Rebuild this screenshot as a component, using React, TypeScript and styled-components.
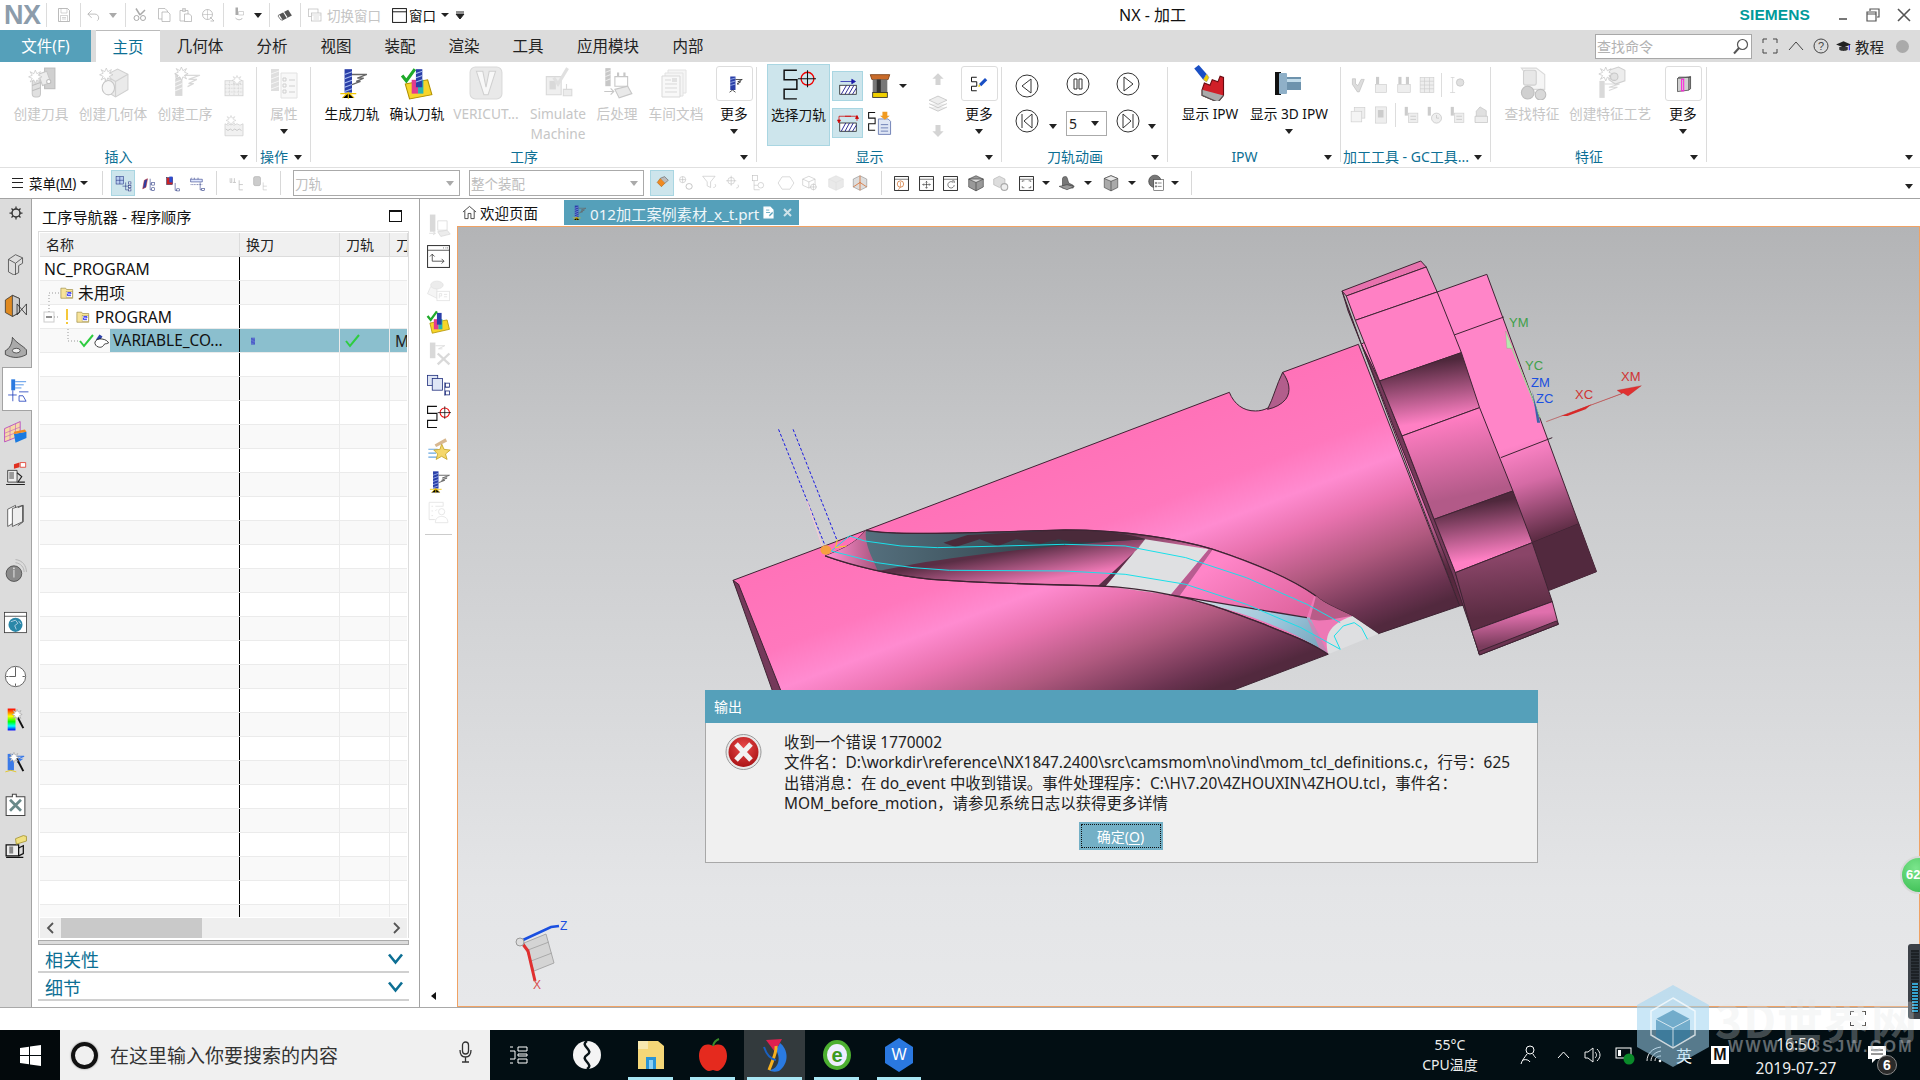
import React from "react";
import styled, { createGlobalStyle } from "styled-components";

const FONT = `"Noto Sans", "Noto Sans CJK SC", sans-serif`;
const Global = createGlobalStyle`
  html, body { margin: 0; padding: 0; width: 1920px; height: 1080px; overflow: hidden; background: #fff; }
  * { box-sizing: border-box; }
  body { font-family: ${FONT}; color: #111; }
`;

const Screen = styled.div`position: relative; width: 1920px; height: 1080px; display: flex; flex-direction: column; overflow: hidden;`;

/* ---------- icons ---------- */
const g = "#9a9a9a", b = "#2a3fa8";
const Spark = ({ x = 8, y = 6 }: { x?: number; y?: number }) => (
  <path d={`M${x} ${y - 5}l1.5 3.5 3.5-2-2 3.5 3.5 1.5-3.5 1.5 2 3.5-3.5-2-1.5 3.5-1.5-3.5-3.5 2 2-3.5-3.5-1.5 3.5-1.5-2-3.5 3.5 2z`} fill="#fff" stroke="#999" strokeWidth=".7" />
);
const DrillBody = ({ c = b, x = 9 }: { c?: string; x?: number }) => (
  <g>
    <rect x={x} y="3" width="7" height="22" fill={c} />
    <path d={`M${x} 8l7-2.5M${x} 12l7-2.5M${x} 16l7-2.5M${x} 20l7-2.5M${x} 24l7-2.5`} stroke="#a9bdf0" strokeWidth="1" />
  </g>
);
const ICONS: Record<string, React.ReactNode> = {
  genPath: <g><DrillBody /><path d="M16 8h14l-9 3.5h6l-7 3h4l-8 3" stroke="#666" strokeWidth="1.2" fill="none" /><path d="M7 30l5.5-5 5.5 5M12.5 25v6M5 26h15" stroke="#f0c400" strokeWidth="1" /></g>,
  verify: <g><path d="M2 9l4 5 8-11" stroke="#1faa2a" strokeWidth="3" fill="none" /><path d="M5 17l21-4 4 14-21 4z" fill="#f7d52a" stroke="#b19100" /><rect x="11" y="13" width="6" height="13" fill="#e23c8e" /><rect x="17" y="13" width="5" height="13" fill="#27b5b5" /><rect x="15" y="3" width="6" height="17" fill={b} /><path d="M15 7l6-2M15 11l6-2M15 15l6-2" stroke="#a9bdf0" /></g>,
  vericut: <g><rect x="1" y="1" width="30" height="30" rx="5" fill="#d8d8d8" stroke="#bbb" /><path d="M7 5h6l3 15 3-15h6l-7 22h-4z" fill="#f4f4f4" stroke="#aaa" /></g>,
  simulate: <g><path d="M5 10h14v17H5z" fill="#e2e2e2" stroke="#bbb" /><rect x="8" y="14" width="6" height="8" fill="#bbb" /><path d="M12 11l4 6 9-15" stroke="#c8c8c8" strokeWidth="3" fill="none" /><path d="M21 22h8v6h-8z M24 17v5" fill="#ddd" stroke="#bbb" /></g>,
  post: <g><rect x="5" y="2" width="5" height="17" fill={g} /><path d="M5 6l5-2M5 10l5-2M5 14l5-2" stroke="#ddd" /><path d="M14 10h12v9H14z" fill="none" stroke={g} /><path d="M17 6v4M23 6v4" stroke={g} strokeWidth="2" /><path d="M14 22l12-3 4 7-12 4z" fill="#d8d8d8" stroke={g} /><path d="M4 24h9M10 21l3 3-3 3" stroke={g} fill="none" /></g>,
  docs: <g><path d="M8 3h18v23H8z" fill="#eee" stroke="#ccc" /><path d="M5 6h18v23H5z" fill="#eee" stroke="#ccc" /><path d="M2 9h18v21H2z" fill="#f4f4f4" stroke="#bbb" /><path d="M5 13h6M5 17h12M5 21h12M5 25h12" stroke="#bbb" /><rect x="12" y="11" width="5" height="4" fill="#ccc" /></g>,
  tool: <g><rect x="19" y="2" width="10" height="20" fill="#aaa" stroke="#888" /><path d="M13 8l8-3 4 11-8 3z" fill="#ddd" stroke="#999" /><circle cx="23" cy="15" r="2" fill="#fff" stroke="#888" /><rect x="7" y="13" width="8" height="17" rx="3" fill="#c8c8c8" stroke="#999" /><path d="M7 19l8-3M7 24l8-3" stroke="#888" /><Spark x={10} y={9} /></g>,
  geom: <g><path d="M8 9l12-6 10 5v15l-12 7-10-6z" fill="#d9d9d9" stroke="#aaa" /><path d="M8 9l10 6v15M18 15l12-7" stroke="#aaa" fill="none" /><ellipse cx="11" cy="21" rx="6" ry="7" fill="#eee" stroke="#999" /><Spark x={9} y={7} /></g>,
  op: <g><rect x="6" y="7" width="7" height="22" fill="#bbb" /><path d="M6 12l7-3M6 16l7-3M6 20l7-3M6 24l7-3" stroke="#eee" /><path d="M13 9h17l-11 4h8l-8 4h5l-6 3" stroke="#bbb" strokeWidth="1.2" fill="none" /><Spark x={12} y={6} /></g>,
  sheet: <g><rect x="4" y="9" width="24" height="20" fill="#e6e6e6" stroke="#aaa" /><path d="M4 14h24M4 19h24M4 24h24M10 9v20M16 9v20M22 9v20" stroke="#aaa" strokeDasharray="1 1" /><Spark x={20} y={7} /></g>,
  wave: <g><path d="M4 13l4 2 4-2 4 2 4-2 4 2 4-2v16H4z" fill="#e6e6e6" stroke="#aaa" /><path d="M5 20l3 2 3-2 3 2 3-2 3 2 3-2 3 2" stroke="#888" fill="none" /><Spark x={12} y={7} /></g>,
  attrs: <g><rect x="3" y="2" width="8" height="22" fill="#c5c5c5" /><path d="M3 7l8-3M3 12l8-3M3 17l8-3M3 22l8-3" stroke="#eee" /><path d="M13 6h16v25H13z" fill="#f3f3f3" stroke="#ccc" /><path d="M15 11h3v3h-3zM15 17h3v3h-3zM15 23h3v3h-3zM21 13h6M21 19h6M21 25h6" stroke="#aaa" fill="none" /></g>,
  selectPath: <g><path d="M13 1H1v9h12v9H1v9h12" fill="none" stroke="#111" strokeWidth="1.4" transform="translate(1 2)" /><circle cx="24" cy="11" r="6" fill="none" stroke="#e00" strokeWidth="1.3" /><path d="M15 11h17M24 3v16" stroke="#111" /></g>,
  hatchA: <g><rect x="5" y="15" width="22" height="12" fill="#fff" stroke="#111" /><path d="M7 27l7-12M12 27l7-12M17 27l7-12M22 27l5-8" stroke="#1a1a8c" strokeWidth="1.2" /><path d="M6 10h18M21 7l5 3-5 3z" stroke="#1a1aa8" fill="#1a1aa8" /></g>,
  hatchB: <g><rect x="5" y="16" width="22" height="11" fill="#fff" stroke="#111" /><path d="M7 27l6-11M12 27l6-11M17 27l6-11M22 27l5-8" stroke="#1a1a8c" strokeWidth="1.2" /><path d="M4 13V7h24v6" stroke="#c00" fill="none" /><path d="M2 12h4l-2 4zM26 10h4l-2-4zM12 7h8" fill="#c00" stroke="#c00" /></g>,
  bit: <g><path d="M4 2h24l-2 6H6z" fill="#c96b2a" stroke="#7a3c10" /><rect x="7" y="8" width="18" height="16" fill="#777" /><rect x="12" y="8" width="5" height="16" fill="#333" /><rect x="7" y="24" width="18" height="6" fill="#f0d000" stroke="#222" /></g>,
  pathDoc: <g><path d="M10 3H2v7h8v7H2v8h8" fill="none" stroke="#111" strokeWidth="1.3" /><path d="M14 11h12l3 3v16H14z" fill="#dfe6f5" stroke="#5a6eaa" /><path d="M17 18h9M17 22h9M17 26h9" stroke="#5a6eaa" /><path d="M19 2h6v5h3l-6 5-6-5h3z" fill="#f09a20" /></g>,
  arrowUp: <path d="M16 5l9 9h-5v10h-8V14H7z" fill="#d4d4d4" />,
  arrowDown: <path d="M16 27l9-9h-5V8h-8v10H7z" fill="#d4d4d4" />,
  layers: <g><path d="M16 3l13 6-13 6-13-6z M3 14l13 6 13-6M3 19l13 6 13-6" fill="#eee" stroke="#bbb" /></g>,
  moreDrill: <g><rect x="11" y="6" width="7" height="18" fill={b} /><path d="M11 10l7-2M11 14l7-2M11 18l7-2" stroke="#a9bdf0" /><path d="M18 10h9l-6 3h4l-5 3h3" stroke="#222" fill="none" /><path d="M10 27l4-3 4 3" stroke="#222" fill="none" /></g>,
  moreS: <g><path d="M13 7H6v6h7v6H6v6h7" fill="none" stroke="#111" strokeWidth="1.3" /><path d="M16 16l8-8 3 3-8 8z" fill="#1a4fc4" /><path d="M16 16l2 3-3 1z" fill="#f0d000" /></g>,
  ipw: <g><path d="M9 22l2-6 5 2 2-5 5 2 2-5 3 1v16l-5 6-14-6z" fill="#d01f28" stroke="#6a0a10" /><path d="M9 22v5l14 6 5-6" fill="#aaa" stroke="#555" /><path d="M2 3l4-3 7 8-3 5z" fill="#1a4fc4" /><path d="M10 13l3-5 2 3-2 4z" fill="#f0d000" stroke="#888" strokeWidth=".5" /></g>,
  ipw3d: <g><rect x="2" y="5" width="6" height="23" fill="#111" /><rect x="6" y="6" width="8" height="21" rx="1" fill="#8fb0c8" /><rect x="14" y="10" width="14" height="13" fill="#6e93ad" /><rect x="14" y="12" width="14" height="3" fill="#c3dcea" /></g>,
  binocular: <g><path d="M6 2h14l8 6v14H12V10z" fill="#eee" stroke="#bbb" /><rect x="8" y="4" width="12" height="14" rx="2" fill="#d4d4d4" stroke="#aaa" /><circle cx="12" cy="25" r="6" fill="#aaa" stroke="#888" /><circle cx="24" cy="27" r="5" fill="#bbb" stroke="#888" /></g>,
  featureOp: <g><rect x="6" y="14" width="5" height="16" fill="#bbb" /><path d="M11 17h14l-10 3h8l-8 3" stroke="#bbb" fill="none" /><path d="M15 4l9-3 6 3v10l-9 3-6-4z" fill="#e0e0e0" stroke="#aaa" /><circle cx="20" cy="10" r="3.5" fill="#ccc" stroke="#999" /><Spark x={12} y={6} /></g>,
  moreCube: <g><path d="M8 8l16-2v19l-16 2z" fill="#d0d0d0" stroke="#333" /><path d="M24 6l3-1v18l-3 2M8 8l2-2h17" fill="#888" stroke="#333" /><rect x="14" y="9" width="3" height="17" fill="none" stroke="#ff1fdc" strokeWidth="1.5" /></g>,
  gcA: <path d="M7 6h5v8l4 3 5-10h5l-8 20h-3L7 15z" fill="#ddd" stroke="#bbb" />,
  gcB: <g><rect x="8" y="3" width="5" height="12" fill="#ccc" /><rect x="7" y="15" width="18" height="13" fill="#eee" stroke="#ccc" /></g>,
  gcC: <g><rect x="7" y="3" width="5" height="12" fill="#ccc" /><rect x="19" y="3" width="5" height="12" fill="#ccc" /><rect x="6" y="15" width="20" height="13" fill="#eee" stroke="#ccc" /></g>,
  gcD: <g><rect x="5" y="4" width="22" height="24" fill="#eee" stroke="#ccc" /><path d="M5 10h22M5 16h22M5 22h22M12 4v24M20 4v24" stroke="#ccc" /></g>,
  gcE: <g><path d="M6 4h6M9 4v24M5 28h8" stroke="#ccc" /><circle cx="21" cy="12" r="6" fill="#e0e0e0" stroke="#bbb" /></g>,
  gcF: <g><rect x="10" y="4" width="17" height="17" fill="#eee" stroke="#ccc" /><rect x="5" y="10" width="17" height="17" fill="#f4f4f4" stroke="#ccc" /></g>,
  gcG: <g><rect x="7" y="3" width="18" height="26" fill="#eee" stroke="#ccc" /><rect x="11" y="8" width="9" height="12" fill="#ccc" /></g>,
  gcH: <g><rect x="6" y="3" width="5" height="14" fill="#ccc" /><rect x="12" y="13" width="15" height="15" fill="#eee" stroke="#ccc" /><path d="M15 18h9M15 23h9" stroke="#bbb" /></g>,
  gcI: <g><rect x="6" y="3" width="5" height="14" fill="#ccc" /><circle cx="20" cy="21" r="8" fill="#eee" stroke="#bbb" /><path d="M20 16v5h4" stroke="#bbb" fill="none" /></g>,
  gcJ: <g><path d="M16 3l10 6v12H10V10z" fill="#e0e0e0" stroke="#bbb" /><path d="M8 18h20v10H8z" fill="#eee" stroke="#bbb" /></g>,
  save: <g><path d="M5 3h18l4 4v22H5z" fill="none" stroke="#aaa" strokeWidth="1.6" /><path d="M10 3v9h12V3M9 28V17h14v11M12 21h8M12 24h8" stroke="#aaa" fill="none" /></g>,
  undo: <path d="M12 5L4 13l8 8M4 13h15c5 0 8 4 8 8 0 3-1 5-3 6" fill="none" stroke="#aaa" strokeWidth="1.6" />,
  cut: <g><path d="M16 16L8 3M16 16L26 6" stroke="#aaa" fill="none" strokeWidth="3" /><circle cx="9" cy="22" r="5" fill="none" stroke="#aaa" strokeWidth="2" /><circle cx="22" cy="22" r="5" fill="none" stroke="#aaa" strokeWidth="2" /></g>,
  copy: <g><path d="M5 3h13l5 5v16H5z" fill="#fff" stroke="#aaa" strokeWidth="1.4" /><path d="M12 10h12l4 4v15H12z" fill="#fff" stroke="#aaa" strokeWidth="1.4" /></g>,
  paste: <g><path d="M4 7h16v21H4z" fill="#fff" stroke="#aaa" strokeWidth="1.4" /><path d="M9 3h6v6H9z" fill="#ddd" stroke="#aaa" /><path d="M13 14h10l4 4v11H13z" fill="#fff" stroke="#aaa" strokeWidth="1.4" /></g>,
  repeat: <g><circle cx="15" cy="15" r="10" fill="none" stroke="#aaa" strokeWidth="1.4" /><path d="M15 5v20M5 15h20" stroke="#aaa" /><path d="M20 20l8 8h-7" fill="none" stroke="#aaa" strokeWidth="1.4" /></g>,
  qatSel: <g><rect x="7" y="1" width="5" height="15" fill="#aaa" /><path d="M13 9h10v7H13z" fill="none" stroke="#aaa" /><path d="M7 22c6 6 12 3 14 0" stroke="#aaa" fill="none" strokeWidth="1.6" /></g>,
  eraser: <g><path d="M4 14l17-9 7 11-17 9z" fill="#555" /><path d="M12 9l7 11" stroke="#fff" strokeWidth="2" /><path d="M4 14l-2 3 5 7 4 1" fill="none" stroke="#111" /></g>,
  switchWin: <g><rect x="3" y="4" width="19" height="15" fill="#fff" stroke="#bbb" strokeWidth="1.4" /><rect x="9" y="12" width="19" height="16" fill="#fff" stroke="#bbb" strokeWidth="1.4" /><path d="M9 16h19M13 20h11M13 24h11" stroke="#bbb" /></g>,
  window: <g><rect x="3" y="3" width="26" height="26" fill="#fff" stroke="#111" strokeWidth="1.8" /><path d="M3 9h26" stroke="#111" strokeWidth="1.8" /></g>,
  tree1: <g><rect x="2" y="3" width="14" height="14" fill="#b8cdf0" stroke="#1a2a7a" /><path d="M9 3v14M2 10h14" stroke="#1a2a7a" /><path d="M20 14v14M14 21h14M20 28h8" stroke="#1a2a7a" fill="none" /><rect x="25" y="13" width="5" height="4" fill="#fff" stroke="#1a2a7a" /><rect x="25" y="20" width="5" height="4" fill="#fff" stroke="#1a2a7a" /><rect x="25" y="26" width="5" height="4" fill="#fff" stroke="#1a2a7a" /></g>,
  tree2: <g><path d="M7 26l3-16 6-3-3 16z" fill={b} stroke="#c02020" /><path d="M21 7v21h7M21 17h7" stroke="#1a2a7a" fill="none" /><rect x="24" y="14" width="5" height="5" fill="#fff" stroke="#1a2a7a" /><rect x="24" y="24" width="5" height="5" fill="#fff" stroke="#1a2a7a" /></g>,
  tree3: <g><rect x="5" y="5" width="11" height="13" fill="#c22" stroke="#225" /><rect x="10" y="3" width="6" height="11" fill="#2a4bd0" /><path d="M21 15v14h7" stroke="#1a2a7a" fill="none" /><rect x="24" y="26" width="5" height="4" fill="#fff" stroke="#1a2a7a" /></g>,
  tree4: <g><path d="M3 8h22v5H3zM3 8l2-3M10 8V5M17 8V5" fill="#e0e8ff" stroke="#1a2a7a" /><path d="M3 18h22" stroke="#1a2a7a" strokeDasharray="2 1" /><path d="M21 14v14h7" stroke="#1a2a7a" fill="none" /><rect x="24" y="25" width="5" height="4" fill="#fff" stroke="#1a2a7a" /></g>,
  treeG1: <g><path d="M4 6v8h3V6M12 6v8M9 14h6M21 10v18h7M21 18h7" stroke="#bbb" fill="none" strokeWidth="1.4" /></g>,
  treeG2: <g><rect x="3" y="3" width="13" height="17" rx="3" fill="#ccc" stroke="#aaa" /><path d="M21 14v14h7M21 21h7" stroke="#bbb" fill="none" /></g>,
  filt1: <g><path d="M12 6l9 9-7 7-8-8z" fill="#f08a20" stroke="#a05a10" /><path d="M12 6l8-3 7 7-6 5" fill="#bbb" stroke="#555" /></g>,
  chain: <g><circle cx="10" cy="10" r="5.5" fill="none" stroke="#bbb" /><path d="M4.500 10h11M10 4.500v11" stroke="#bbb" /><rect x="16" y="17" width="11" height="10" rx="5" fill="none" stroke="#bbb" strokeWidth="1.5" /></g>,
  funnel: <g><path d="M3 4h22l-8 10v10l-6-3v-7z" fill="#fff" stroke="#bbb" /><path d="M22 24c4 0 5-3 3-6" stroke="#bbb" fill="none" /></g>,
  tgt: <g><circle cx="11" cy="12" r="6" fill="none" stroke="#bbb" /><path d="M11 3v18M2 12h18" stroke="#bbb" /><path d="M20 25c4 0 5-3 3-6" stroke="#bbb" fill="none" /></g>,
  boxTree: <g><rect x="6" y="3" width="9" height="9" fill="#fff" stroke="#bbb" /><path d="M9 12v16M9 20h10M9 28h10" stroke="#bbb" /><circle cx="21" cy="20" r="5" fill="#fff" stroke="#bbb" /></g>,
  hex: <path d="M9 5h14l7 11-7 11H9L2 16z" fill="#fff" stroke="#ccc" strokeWidth="1.3" />,
  cubeT: <g><path d="M3 9l11-5 11 5v11l-11 5-11-5z" fill="#fff" stroke="#bbb" /><path d="M3 9l11 5 11-5M14 14v11" stroke="#bbb" fill="none" /><circle cx="22" cy="23" r="5" fill="#fff" stroke="#bbb" /><path d="M22 17v12M16 23h12" stroke="#bbb" /></g>,
  cubeG: <g><path d="M3 9l13-6 13 6v14l-13 6-13-6z" fill="#e9e9e9" stroke="#ddd" /><path d="M3 9l13 6 13-6M16 15v14" stroke="#ddd" fill="none" /></g>,
  cubeCut: <g><path d="M4 9l12-6 12 6v14l-12 6-12-6z" fill="#ddd" stroke="#888" /><path d="M16 3v26M16 15l12 8M4 23l12-8" fill="none" stroke="#d85a10" strokeWidth="1.2" /></g>,
  vZoom: <g><rect x="3" y="3" width="26" height="26" fill="#fff" stroke="#111" strokeWidth="1.6" /><path d="M3 8h26" stroke="#111" /><circle cx="14" cy="17" r="6" fill="none" stroke="#c85a10" strokeWidth="1.2" /><path d="M14 13v8M10 28l5-7" stroke="#c85a10" /></g>,
  vPan: <g><rect x="3" y="3" width="26" height="26" fill="#fff" stroke="#111" strokeWidth="1.6" /><path d="M3 8h26M16 12v13M9 18h14M14 14l2-2 2 2M14 23l2 2 2-2M11 16l-2 2 2 2M21 16l2 2-2 2" stroke="#111" fill="none" /></g>,
  vRot: <g><rect x="3" y="3" width="26" height="26" fill="#fff" stroke="#111" strokeWidth="1.6" /><path d="M3 8h26" stroke="#111" /><path d="M21 14a6 6 0 1 0 2 5" stroke="#111" fill="none" /><path d="M19 11h4v4" stroke="#111" fill="none" /></g>,
  cubeD: <g><path d="M3 9l13-6 13 6v14l-13 7-13-7z" fill="#999" stroke="#333" /><path d="M3 9l13 6 13-6z" fill="#ddd" stroke="#333" /><path d="M16 15v15" stroke="#333" /></g>,
  cubeGear: <g><path d="M3 9l10-5 10 5v10l-10 5-10-5z" fill="#ddd" stroke="#aaa" /><circle cx="22" cy="23" r="6" fill="#eee" stroke="#aaa" strokeWidth="2" /></g>,
  vFit: <g><rect x="3" y="3" width="26" height="26" fill="#fff" stroke="#111" strokeWidth="1.6" /><path d="M3 8h26M8 13v-2h4M24 13v-2h-4M8 21v3h4M24 21v3h-4" stroke="#111" fill="none" /></g>,
  shade: <g><path d="M8 20V8c0-3 6-5 8-2l3 10 8 4v5H8z" fill="#777" stroke="#333" /><path d="M2 22l14-3 13 3-13 6z" fill="#999" stroke="#333" /></g>,
  cylinder: <g><path d="M4 8l12-5 12 5v16l-12 6-12-6z" fill="#aaa" stroke="#333" /><path d="M4 8l12 5 12-5-12-5zM16 13v17" fill="#e8e8e8" stroke="#333" /></g>,
  vis: <g><circle cx="14" cy="13" r="11" fill="#777" stroke="#222" /><rect x="12" y="10" width="17" height="19" fill="#fff" stroke="#333" /><path d="M15 15h2v2h-2zM15 21h2v2h-2zM19 16h7M19 22h7" stroke="#333" fill="none" /></g>,
  gear: <g><circle cx="16" cy="16" r="8" fill="none" stroke="#333" strokeWidth="3" /><path d="M16 3v5M16 24v5M3 16h5M24 16h5M7 7l3 3M22 22l3 3M25 7l-3 3M7 25l3-3" stroke="#333" strokeWidth="2.5" /></g>,
  railPart: <g><path d="M7 12l9-6 9 4v7l-5 3v9l-6 3-7-4z" fill="#ddd" stroke="#444" /><path d="M7 12l9 5 9-7M16 17v15" stroke="#444" fill="none" /></g>,
  railOp: <g><path d="M3 9l9-6 9 4v18l-9 5-9-5z" fill="#e08a20" stroke="#333" /><path d="M12 3l9 4v18l-9 5z" fill="#ccc" stroke="#333" /><path d="M18 14l12 14M30 14L18 28M18 14v14M30 14v14" stroke="#222" fill="none" /></g>,
  railSurf: <g><path d="M12 3c6 8 14 11 18 16v6c-9 5-18 5-27 0v-5c5-2 9-9 9-17z" fill="#aaa" stroke="#333" /><ellipse cx="17" cy="20" rx="5" ry="3" fill="#eee" stroke="#333" /></g>,
  railNav: <g><rect x="8" y="3" width="5" height="14" fill="#2a7ae0" /><path d="M13 6h14M13 10h11M13 14h8" stroke="#2a7ae0" /><path d="M10 17v14M4 23h11M18 19h12" stroke="#1a3ab8" /><path d="M18 24v7h9l-4-7z" fill="#fff" stroke="#1a3ab8" /></g>,
  railTable: <g><path d="M2 11l20-9v18L2 28z" fill="#f6d9a8" stroke="#b23ac0" /><path d="M2 17l20-8M2 22l20-8M9 8v18M16 5v18" stroke="#b23ac0" strokeWidth=".6" /><path d="M14 18l16-3v8l-14 6z" fill="#1a7ae0" /><path d="M14 18l16-3-2-3-14 3z" fill="#f08a20" /></g>,
  railMach: <g><path d="M6 12h12v15H6z" fill="#eee" stroke="#222" /><rect x="8" y="14" width="6" height="9" fill="#999" /><path d="M18 15l6 5-5 7h9M4 30h24" stroke="#222" fill="none" strokeWidth="1.4" /><path d="M14 4l7-2v6l-7 2z" fill="#e03020" /><path d="M22 2h7v6h-7z" fill="#fff" stroke="#e03020" /></g>,
  railBooks: <g><path d="M6 8l10-5v21L6 30z" fill="#fff" stroke="#444" /><path d="M12 7l13-4v21l-13 6z" fill="#eee" stroke="#444" /><path d="M19 6l7-3v21l-7 5" fill="none" stroke="#444" /></g>,
  railInfo: <g><path d="M16 2c9 1 14 8 14 16M16 6c7 1 11 6 11 12" stroke="#aaa" fill="none" /><circle cx="14" cy="20" r="10" fill="#8a8a8a" stroke="#444" /><path d="M14 15v10" stroke="#fff" /><circle cx="14" cy="13" r="1" fill="#fff" /></g>,
  railGlobe: <g><rect x="2" y="3" width="28" height="26" fill="#fff" stroke="#333" /><path d="M2 8h28" stroke="#333" /><circle cx="16" cy="19" r="9" fill="#2a87a8" /><path d="M10 15l6-2 3 4-4 3 2 5M20 14l3 4" stroke="#cde" fill="none" /></g>,
  railClock: <g><circle cx="16" cy="16" r="13" fill="#fff" stroke="#444" /><path d="M16 4v12h-8M16 28v-3M28 16h-3M4 16h3" stroke="#333" fill="none" /></g>,
  railRainbow: <g><defs><linearGradient id="rb" x1="0" y1="0" x2="0" y2="1"><stop offset="0" stopColor="#f00" /><stop offset=".35" stopColor="#ff0" /><stop offset=".6" stopColor="#0f0" /><stop offset=".8" stopColor="#0ff" /><stop offset="1" stopColor="#00f" /></linearGradient></defs><rect x="6" y="2" width="10" height="28" fill="url(#rb)" /><path d="M17 10l9 17" stroke="#111" strokeWidth="2.5" /><Spark x={18} y={8} /></g>,
  railFresh: <g><rect x="6" y="5" width="8" height="21" fill="#3a7ae8" /><path d="M14 8h13l-9 4h6l-6 4" stroke="#3a7ae8" fill="none" strokeWidth="1.3" /><path d="M3 28l7-2 7 2" stroke="#e8c400" fill="none" /><path d="M17 10l9 17" stroke="#111" strokeWidth="2.5" /><Spark x={14} y={8} /></g>,
  railTools: <g><path d="M4 6h8V3h5v3h11v24H4z" fill="#fff" stroke="#444" strokeWidth="1.3" /><path d="M9 24l14-14M23 24L9 10" stroke="#6a8a8a" strokeWidth="3.5" /></g>,
  railFold: <g><path d="M4 14h16v14H4z" fill="#eee" stroke="#111" strokeWidth="1.6" /><rect x="8" y="16" width="5" height="9" fill="#888" /><path d="M20 18l6-3v10l-6 3M4 30h22" stroke="#111" fill="none" strokeWidth="1.6" /><path d="M16 6l10-4 4 1v6l-13 4z" fill="#f0e080" stroke="#a0902a" /></g>,
  rFade1: <g><rect x="5" y="2" width="7" height="22" fill="#bbb" /><path d="M15 10h12v12H15z" fill="none" stroke="#bbb" /><path d="M15 24l12-2 4 5-12 3z" fill="#ddd" stroke="#bbb" /><path d="M4 26h8M9 24l3 2-3 2" stroke="#bbb" fill="none" /></g>,
  rWin: <g><rect x="2" y="2" width="28" height="28" fill="#fff" stroke="#333" strokeWidth="1.3" /><path d="M2 8h28M22 5h1M25 5h1M27 5h1" stroke="#333" /><path d="M8 22V13M5 16l3-3 3 3M8 22h15M20 19l3 3-3 3" stroke="#333" fill="none" /></g>,
  rP: <g><path d="M2 20l12 6V14l-8-3z" fill="#eee" stroke="#ccc" /><ellipse cx="14" cy="9" rx="8" ry="5" fill="#ddd" stroke="#ccc" /><rect x="14" y="17" width="16" height="12" fill="#fff" stroke="#ccc" /><path d="M17 20v6M17 20h3v3h-3M23 21h4M23 24h4" stroke="#ccc" fill="none" /></g>,
  rVerify: <g><path d="M2 9l4 5 8-11" stroke="#1faa2a" strokeWidth="3" fill="none" /><path d="M5 18l22-4 3 12-22 5z" fill="#f7d52a" stroke="#b19100" /><rect x="10" y="13" width="6" height="13" fill="#e23c8e" /><rect x="16" y="13" width="5" height="13" fill="#27b5b5" /><rect x="14" y="5" width="6" height="15" fill={b} /></g>,
  rTrim: <g><rect x="5" y="2" width="7" height="20" fill="#bbb" /><path d="M15 16l15 14M30 16L15 30" stroke="#bbb" strokeWidth="3" /><path d="M12 6h12l-8 4h5" stroke="#bbb" fill="none" /></g>,
  rCopy: <g><rect x="2" y="3" width="13" height="13" fill="#dfe6f5" stroke="#1a2a7a" /><rect x="8" y="7" width="13" height="15" fill="#dfe6f5" stroke="#1a2a7a" /><path d="M24 12v17M24 18h6M24 27h6" stroke="#1a2a7a" /><rect x="25" y="13" width="5" height="5" fill="#fff" stroke="#1a2a7a" /><rect x="25" y="23" width="5" height="5" fill="#fff" stroke="#1a2a7a" /></g>,
  rStar: <g><path d="M3 17h12M3 22h10M3 27h14" stroke="#6aa8e0" strokeWidth="1.5" /><path d="M20 10l3 7 8 1-6 5 2 7-7-4-7 4 2-7-5-5 8-1z" fill="#f5d76a" stroke="#c0a020" /><path d="M11 11l14-8 2 4-14 7z" fill="#d8b890" /></g>,
  rDoc: <g><path d="M4 3h18v5h-4M4 3v22h8M4 25h6" stroke="#ccc" fill="none" /><path d="M7 8h2M7 14h2M7 20h2M12 8h6M12 14l2-2" stroke="#ccc" /><circle cx="20" cy="15" r="4" fill="none" stroke="#ccc" /><path d="M12 29c0-6 4-8 8-8s8 2 8 8z" fill="none" stroke="#ccc" /></g>,
  hat: <g><path d="M2 12l14-6 14 6-14 6z" fill="#222" /><path d="M8 17v5c4 3 12 3 16 0v-5" fill="#333" /><path d="M27 13v10" stroke="#2222ee" strokeWidth="2" /></g>,
  home: <path d="M2 15L16 3l14 12M6 12v17h7V18h6v11h7V12" fill="#fff" stroke="#333" strokeWidth="1.8" />,
  folder: <g><path d="M2 8V5h11l2 3h14v20H2z" fill="#f7e39a" stroke="#9a8a40" strokeWidth="1.5" /><rect x="14" y="13" width="14" height="13" fill="#fff" stroke="#9a8a40" /><path d="M17 15h8v3h-8v4h8" fill="none" stroke="#2222ee" strokeWidth="2" /></g>,
  opVar: <g><path d="M4 13l7-10 6 4-7 10z" fill="#2a3fa8" /><path d="M2 18c2-5 8-7 14-6 8 1 12 5 13 8-3 2-6 1-8 2-2 4-6 8-12 6-5-1-8-6-7-10z" fill="#fff" stroke="#111" strokeWidth="1.6" /></g>,
  tinyDrill: <g><rect x="8" y="3" width="16" height="27" fill="#3a4cc0" /><path d="M8 9l16-4M8 15l16-4M8 21l16-4M8 27l16-4" stroke="#a9bdf0" strokeWidth="1.5" /></g>,
  pageEdit: <g><path d="M5 3h15l7 7v19H5z" fill="#fff" stroke="#fff" strokeWidth="3" /><path d="M10 10h8M10 16h10" stroke="#55a0ba" strokeWidth="2" /><path d="M17 22l8-8 3 3-8 8h-3z" fill="#55a0ba" stroke="#fff" /></g>,
};

const Svg = styled.svg<{ $faded?: boolean }>`
  flex: none;
  display: block;
  ${(p) => (p.$faded ? "opacity: .55;" : "")}
`;
const Ic = ({ n, s = 24, f, w, h }: { n: string; s?: number; f?: boolean; w?: number; h?: number }) => (
  <Svg viewBox="0 0 32 32" width={w ?? s} height={h ?? s} $faded={f}>{ICONS[n]}</Svg>
);

const Caret = styled.span<{ $w?: number; $c?: string }>`
  display: inline-block;
  flex: none;
  width: 0;
  height: 0;
  border-left: ${(p) => (p.$w ?? 9) / 2}px solid transparent;
  border-right: ${(p) => (p.$w ?? 9) / 2}px solid transparent;
  border-top: ${(p) => Math.round((p.$w ?? 9) * 0.55)}px solid ${(p) => p.$c ?? "#222"};
`;

/* ---------- title bar ---------- */
const TitleBar = styled.header`height: 30px; display: flex; align-items: center; position: relative; background: #fff; flex: none;`;
const NxLogo = styled.div`font: 700 27px/30px "Liberation Sans", sans-serif; color: #8c9cab; width: 41px; margin-left: 4px; letter-spacing: -.5px;`;
const QatSep = styled.i<{ $m?: number }>`width: 1px; height: 24px; background: #dcdcdc; flex: none; margin: 0 ${(p) => p.$m ?? 5}px;`;
const QatSlot = styled.span<{ $w?: number }>`width: ${(p) => p.$w ?? 24}px; flex: none; display: flex; justify-content: center; align-items: center;`;
const QatText = styled.span<{ $off?: boolean; $ml: number; $mr: number }>`font-size: 13.5px; color: ${(p) => (p.$off ? "#c4c4c4" : "#111")}; white-space: nowrap; margin: 0 ${(p) => p.$mr}px 0 ${(p) => p.$ml}px;`;
const CenterTitle = styled.div`position: absolute; left: 1119px; top: 3px; font-size: 16px; line-height: 24px; color: #111; white-space: nowrap;`;
const Brand = styled.div`margin-left: auto; font: 700 15.5px/30px "Liberation Sans", sans-serif; color: #009a9a; margin-right: 28px; letter-spacing: .1px;`;
const WinBtns = styled.div`display: flex; align-items: center; width: 82px; gap: 14px;`;

/* ---------- tabs ---------- */
const TabBar = styled.nav`height: 32px; background: #dcdcdc; display: flex; align-items: stretch; flex: none; position: relative;`;
const FileTab = styled.div`width: 91px; background: #55a0ba; color: #fff; font-size: 15.5px; line-height: 32px; text-align: center;`;
const Tab = styled.div<{ $active?: boolean; $w: number }>`
  width: ${(p) => p.$w}px; flex: none; text-align: center; font-size: 15.5px; line-height: 32px;
  ${(p) => (p.$active ? "background:#fff;color:#0d6f94;border-top:1px solid #bbb;margin-left:5px;" : "color:#222;")}
`;
const TabTools = styled.div`margin-left: auto; display: flex; align-items: center; width: 325px; `;
const Search = styled.div`width: 157px; height: 25px; border: 1px solid #a8a8a8; background: #fff; display: flex; align-items: center; justify-content: space-between; font-size: 14px; color: #b2b2b2; padding: 0 2px 0 1px;`;
const Tutorial = styled.span`font-size: 14.5px; color: #222; margin-left: 3px;`;
const GreyDot = styled.i`width: 13px; height: 13px; border-radius: 50%; background: #aaa; margin-left: 12px; flex: none;`;

/* ---------- ribbon ---------- */
const Ribbon = styled.section`height: 106px; display: flex; flex: none; background: #fff; border-bottom: 1px solid #e0e0e0;`;
const Group = styled.div<{ $w: number }>`width: ${(p) => p.$w}px; flex: none; display: flex; flex-direction: column; position: relative;
  &::after { content: ""; position: absolute; right: 0; top: 5px; bottom: 5px; width: 1px; background: #dcdcdc; }
`;
const GroupBody = styled.div<{ $pl?: number }>`height: 86px; display: flex; align-items: flex-start; padding: 2px 0 0 ${(p) => p.$pl ?? 0}px;`;
const GroupFoot = styled.div`display: grid; grid-template-columns: 1fr 20px; align-items: center; height: 18px;
  & > span:last-child { margin-left: 3px; }`;
const GroupLabel = styled.span`text-align: center; color: #0d6f94; font-size: 14px; line-height: 18px; white-space: nowrap; overflow: hidden;`;
const BigBtn = styled.div<{ $w: number; $off?: boolean; $ml?: number }>`
  width: ${(p) => p.$w}px; margin-left: ${(p) => p.$ml ?? 0}px; flex: none; display: flex; flex-direction: column; align-items: center;
  color: ${(p) => (p.$off ? "#c6c6c6" : "#111")}; font-size: 13.7px; line-height: 20px; text-align: center; white-space: nowrap;
`;
const BigIcon = styled.div`height: 37px; display: flex; align-items: center; justify-content: center; margin-bottom: 3px;`;
const MoreBox = styled.div`width: 37px; height: 35px; border: 1px solid #ddd; border-radius: 3px; display: flex; align-items: center; justify-content: center; margin: 2px 0 3px; background: #fff;`;
const BtnCaret = styled.div`height: 14px; display: flex; align-items: center; justify-content: center;`;
const SmallStack = styled.div<{ $w: number; $gap: number; $mt: number; $ml?: number; $start?: boolean }>`
  width: ${(p) => p.$w}px; display: flex; flex-direction: column; align-items: ${(p) => (p.$start ? "flex-start" : "center")};
  gap: ${(p) => p.$gap}px; margin-top: ${(p) => p.$mt}px; margin-left: ${(p) => p.$ml ?? 0}px; flex: none;
`;
const SelectedBtn = styled.div`width: 63px; height: 82px; flex: none; background: #cde5ec; border: 1px solid #a9d6e2; display: flex; flex-direction: column; align-items: center; font-size: 13.7px; line-height: 20px; color: #111;`;
const ToggleSquare = styled.div`width: 31px; height: 30px; background: #cde5ec; border: 1px solid #a9d6e2; display: flex; align-items: center; justify-content: center;`;
const SplitIcon = styled.div`display: flex; align-items: center; gap: 6px; height: 30px; margin-left: 4px;`;
const PlayerGrid = styled.div`display: grid; grid-template-columns: 24px 27px 41px 9px 24px 24px; grid-template-rows: 24px 24px; row-gap: 13px; justify-items: center; align-items: center; margin: 10px 0 0 13px;`;
const GridRowTwo = styled.div`grid-row: 2;`;
const PauseCell = styled.div`grid-column: 3; justify-self: start;`;
const PlayCell = styled.div`grid-column: 5;`;
const Combo5 = styled.div`grid-row: 2; width: 41px; height: 25px; border: 1px solid #aaa; display: flex; align-items: center; justify-content: space-between; padding: 0 7px 0 2px; font-size: 14px; color: #222;`;
const IconColumn = styled.div`margin-top: 8px;`;
const IconRow = styled.div<{ $mt?: number }>`display: flex; align-items: center; height: 26px; margin-top: ${(p) => p.$mt ?? 0}px;`;
const RowSlot = styled.div`width: 23px; flex: none; display: flex; justify-content: center;`;
const RowSep = styled.i`width: 1px; height: 24px; background: #ddd; margin: 0 3px; flex: none;`;
const RibbonEnd = styled.div`flex: 1; display: flex; align-items: flex-end; justify-content: flex-end; padding: 0 7px 7px 0;`;

/* ---------- toolbar ---------- */
const Toolbar = styled.section`height: 31px; flex: none; display: flex; align-items: center; border-bottom: 1px solid #a3a3a3; background: #fff; position: relative;`;
const MenuBtn = styled.div`width: 101px; display: flex; align-items: center; gap: 0; padding-left: 12px; font-size: 13.5px; color: #111;`;
const MenuCaret = styled(Caret)`margin-left: 4px;`;
const MenuBars = styled.span`width: 11px; height: 10px; border-top: 1px solid #222; border-bottom: 1px solid #222; position: relative; margin-right: 6px;
  &::after { content: ""; position: absolute; left: 0; right: 0; top: 3px; height: 1px; background: #222; }`;
const TbSep = styled.i<{ $l?: number; $r?: number }>`width: 1px; height: 24px; background: #d8d8d8; flex: none; margin: 0 ${(p) => p.$r ?? 7}px 0 ${(p) => p.$l ?? 1}px;`;
const TbIcon = styled.span<{ $w?: number; $on?: boolean; $ml?: number }>`
  width: ${(p) => p.$w ?? 24}px; height: 26px; flex: none; display: flex; align-items: center; justify-content: center; margin-left: ${(p) => p.$ml ?? 0}px;
  ${(p) => (p.$on ? "background:#cde5ec;border:1px solid #a9d6e2;" : "")}
`;
const TbCombo = styled.div<{ $w: number; $ml?: number }>`
  width: ${(p) => p.$w}px; height: 26px; margin-left: ${(p) => p.$ml ?? 0}px; border: 1px solid #aaa; flex: none; display: flex; align-items: center; justify-content: space-between;
  padding: 0 5px 0 1px; font-size: 13.5px; color: #bdbdbd;
`;
const TbEnd = styled.span`margin-left: auto; margin-right: 7px;`;

/* ---------- main ---------- */
const Main = styled.main`height: 809px; flex: none; display: flex; border-bottom: 1px solid #a9a9a9; min-height: 0;`;
const Rail = styled.aside`width: 32px; flex: none; background: #dcdcdc; border-right: 1px solid #a3a3a3; display: flex; flex-direction: column;`;
const RailItem = styled.div<{ $mt: number; $h?: number; $on?: boolean }>`
  height: ${(p) => p.$h ?? 28}px; margin-top: ${(p) => p.$mt}px; display: flex; align-items: center; justify-content: center; flex: none;
  ${(p) => (p.$on ? "background:#fff;margin-left:2px;margin-right:-1px;border:1px solid #a3a3a3;border-right:none;" : "")}
`;
const NavPanel = styled.section`width: 388px; flex: none; display: flex; flex-direction: column; background: #fff; border-right: 1px solid #a3a3a3; padding: 0 10px 0 6px;`;
const NavHead = styled.div`height: 32px; flex: none; display: flex; align-items: center; justify-content: space-between; padding: 1px 7px 0 4px; font-size: 15.2px; color: #111;`;
const MaxBox = styled.span`width: 13px; height: 12px; border: 1px solid #111; border-top-width: 2px;`;
const TableFrame = styled.div`border: 1px solid #dcdcdc; padding: 1px 1px 0; height: 707px; flex: none; display: flex; flex-direction: column; overflow: hidden; border-bottom: none;`;
const TableHead = styled.div`height: 24px; flex: none; display: grid; grid-template-columns: 200px 100px 50px 18px; background: #f0f0f0; border-bottom: 1px solid #dcdcdc; font-size: 14px; line-height: 24px; color: #222; width: 368px;`;
const HeadCell = styled.div`padding-left: 6px; border-right: 1px solid #dcdcdc; overflow: hidden; white-space: nowrap;`;
const Rows = styled.div`height: 660px; flex: none; overflow: hidden;`;
const Row = styled.div<{ $odd?: boolean }>`height: 24px; display: grid; grid-template-columns: 200px 100px 50px 18px; width: 368px; background: ${(p) => (p.$odd ? "#f9f9f9" : "#fff")}; border-bottom: 1px solid #ebebeb;`;
const NameCell = styled.div`border-right: 1px solid #000; display: flex; align-items: center; font-size: 15.7px; color: #111; white-space: nowrap; overflow: hidden;`;
const DataCell = styled.div<{ $sel?: boolean; $pl?: number; $last?: boolean }>`${(p) => (p.$last ? "" : "border-right: 1px solid #ebebeb;")} display: flex; align-items: center; font-size: 15.7px; color: #222; overflow: hidden; background: ${(p) => (p.$sel ? "#8bbfce" : "transparent")}; padding-left: ${(p) => p.$pl ?? 9}px;`;
const SelName = styled.span`flex: 1; align-self: stretch; background: #8bbfce; padding-left: 3px; line-height: 23px; font-size: 15.4px;`;
const RowLabel = styled.span<{ $ml?: number }>`margin-left: ${(p) => p.$ml ?? 4}px;`;
const Scrollbar = styled.div`height: 20px; flex: none; margin-top: 1px; background: #eee; display: flex; align-items: center; justify-content: space-between; padding: 0 6px; position: relative;`;
const ScrollThumb = styled.div`position: absolute; left: 21px; top: 0; bottom: 0; width: 141px; background: #c9c9c9;`;
const Splitter = styled.div`height: 5px; flex: none; border: 1px solid #aaa; background: #dcdcdc; margin-top: 2px;`;
const Accordion = styled.div`height: 28px; flex: none; display: flex; align-items: center; justify-content: space-between; border-bottom: 2px solid #d0d0d0; color: #0d6f94; font-size: 18px; padding: 2px 6px 0 7px;`;
const SideRail = styled.aside`width: 37px; flex: none; display: flex; flex-direction: column; align-items: center; background: #fff;`;
const SideItem = styled.div<{ $mt: number }>`height: 28px; margin-top: ${(p) => p.$mt}px; flex: none; display: flex; align-items: center; justify-content: center;`;
const SideRule = styled.i`width: 27px; height: 1px; background: #ccc; margin-top: 8px; flex: none;`;
const Collapse = styled.span`margin-top: auto; margin-bottom: 7px; width: 0; height: 0; border-top: 4px solid transparent; border-bottom: 4px solid transparent; border-right: 5px solid #111; margin-left: -10px;`;
const Workspace = styled.div`flex: 1; min-width: 0; display: flex; flex-direction: column;`;
const DocTabs = styled.div`height: 27px; flex: none; display: flex; background: #fff; border-top: 1px solid transparent;`;
const DocTab = styled.div<{ $active?: boolean }>`
  display: flex; align-items: center; height: 25px; gap: 3px; white-space: nowrap;
  ${(p) => (p.$active ? "background:#55a0ba;color:#eef6f9;width:235px;padding-left:6px;margin-left:9px;font-size:15.2px;" : "color:#111;width:98px;padding-left:5px;font-size:14.5px;")}
`;
const CloseGlyph = styled.svg`margin-left: 4px; flex: none;`;
const Canvas = styled.div`flex: 1; position: relative; min-height: 0; border: 1px solid #f0a264; background: linear-gradient(#b3b4b6 0%, #cbccce 35%, #e4e5e7 85%, #e7e8ea 100%); overflow: hidden;`;
const ModelSvg = styled.svg`display: block; position: absolute; left: 0; top: 0;`;

/* ---------- dialog ---------- */
const Dialog = styled.div`position: absolute; left: 705px; top: 690px; width: 833px; height: 173px; background: #f0f0f0; border: 1px solid #a8a8a8; border-top: none; display: flex; flex-direction: column;`;
const DialogHead = styled.div`height: 33px; margin: 0 -1px; background: #55a0ba; color: #fff; font-size: 14px; line-height: 33px; padding-left: 9px; flex: none;`;
const DialogBody = styled.div`display: flex; padding: 10px 0 0 19px;`;
const ErrorGlyph = styled.svg`flex: none;`;
const DialogText = styled.div`margin-left: 22px; font-size: 15.4px; line-height: 20.4px; color: #222; white-space: nowrap;`;
const DialogFoot = styled.div`display: flex; justify-content: center; margin-top: 7px; padding-right: 2px;`;
const OkBtn = styled.button`width: 84px; height: 28px; border: 2px solid #74b0c6; outline: 1px dotted #111; outline-offset: -3px; background: #74b0c6; color: #fff; font: 14px ${FONT}; padding: 0;
  u { text-underline-offset: 2px; }`;

/* ---------- status + taskbar ---------- */
const StatusBar = styled.div`height: 22px; flex: none; background: #fff; display: flex; justify-content: flex-end; align-items: center; padding-right: 54px;`;
const FitCorners = styled.div`width: 16px; height: 15px; position: relative; margin-top: -2px;
  background:
    linear-gradient(#555,#555) 0 0/4px 1px no-repeat, linear-gradient(#555,#555) 0 0/1px 4px no-repeat,
    linear-gradient(#555,#555) 100% 0/4px 1px no-repeat, linear-gradient(#555,#555) 100% 0/1px 4px no-repeat,
    linear-gradient(#555,#555) 0 100%/4px 1px no-repeat, linear-gradient(#555,#555) 0 100%/1px 4px no-repeat,
    linear-gradient(#555,#555) 100% 100%/4px 1px no-repeat, linear-gradient(#555,#555) 100% 100%/1px 4px no-repeat;`;
const Taskbar = styled.footer`height: 50px; flex: none; background: #020e13; display: flex; align-items: stretch; color: #fff; position: relative;`;
const StartBtn = styled.div`width: 60px; background: #03090c; display: flex; align-items: center; justify-content: center; flex: none;`;
const SearchBox = styled.div`width: 430px; background: #f0f0f0; color: #333; font-size: 19px; display: flex; align-items: center; padding: 0 18px 0 11px; flex: none;`;
const CortanaRing = styled.span`width: 27px; height: 27px; border-radius: 50%; border: 4px solid #111; box-shadow: 0 0 2px #777; margin-right: 12px; flex: none;`;
const MicSlot = styled.span`margin-left: auto;`;
const TaskIcons = styled.div`display: flex; align-items: stretch;`;
const TaskItem = styled.div<{ $w: number; $on?: boolean; $bar?: boolean }>`
  width: ${(p) => p.$w}px; flex: none; position: relative; display: flex; align-items: center; justify-content: center;
  ${(p) => (p.$on ? "background:#333a3d;" : "")}
  ${(p) => (p.$bar ? `&::after{content:"";position:absolute;left:3px;right:3px;bottom:0;height:3px;background:#a8e6f4;}` : "")}
`;
const Temp = styled.div`position: absolute; left: 1415px; top: 5px; width: 70px; text-align: center; font-size: 14px; line-height: 20px; color: #eee; `;
const Tray = styled.div`position: absolute; left: 1510px; top: 0; bottom: 0; right: 0; display: flex; align-items: center;`;
const TraySlot = styled.div<{ $w: number }>`width: ${(p) => p.$w}px; flex: none; display: flex; justify-content: center; align-items: center; font-size: 16px; color: #fff;`;
const ClockBox = styled.div`width: 116px; flex: none; text-align: center; font-size: 15.500px; line-height: 24px; color: #eee; padding-top: 1px;`;
const Notify = styled.div`position: relative; width: 30px; margin-left: 8px; flex: none; height: 50px; display: flex; align-items: center; justify-content: center;`;
const NotifyBadge = styled.span`position: absolute; left: 15px; top: 25px; width: 20px; height: 20px; border-radius: 50%; background: #2a2a2a; border: 1px solid #888; font: 700 14px/18px "Liberation Sans", sans-serif; text-align: center; color: #fff;`;
const MBox = styled.span`width: 18px; height: 18px; background: #fff; color: #111; font: 700 16px/18px "Liberation Sans", sans-serif; text-align: center;`;

/* ---------- overlays ---------- */
const Ball = styled.div`position: absolute; left: 1900px; top: 856px; width: 38px; height: 38px; border-radius: 50%; background: radial-gradient(circle at 40% 30%, #7be58c, #32b84a); border: 2px solid #d8d8d8; color: #fff; font: 700 13px/34px "Liberation Sans", sans-serif; padding-left: 4px;`;
const Meter = styled.div`position: absolute; left: 1908px; top: 944px; width: 14px; height: 75px; background: #3c4148; border-radius: 3px; padding: 6px 3px; display: flex;`;
const MeterInner = styled.div`flex: 1; background: repeating-linear-gradient(#1d2125 0 2px, #2c3238 2px 3px); position: relative;
  &::after { content: ""; position: absolute; left: 1px; right: 1px; bottom: 0; height: 30px; background: repeating-linear-gradient(#36a4d0 0 2px, #1d2125 2px 3px); }`;
const Watermark = styled.svg`position: absolute; left: 1630px; top: 980px; pointer-events: none;`;
const WmText = styled.div`position: absolute; left: 1715px; top: 992px; font: 700 46px/52px "Noto Sans CJK SC", sans-serif; color: rgba(225,228,230,.3); letter-spacing: 1px; white-space: nowrap;`;
const WmUrl = styled.div`position: absolute; left: 1728px; top: 1037px; font: 700 16px/20px "Liberation Sans", sans-serif; letter-spacing: 2.3px; color: rgba(190,195,200,.5); white-space: nowrap;`;

/* ---------- player glyphs ---------- */
const Circle = ({ k }: { k: "prev" | "pause" | "play" | "first" | "last" }) => (
  <svg width="24" height="24" viewBox="0 0 24 24">
    <circle cx="12" cy="12" r="11" fill="#fff" stroke="#333" />
    {k === "prev" && <path d="M16 5v14L7 12z" fill="none" stroke="#333" />}
    {k === "play" && <path d="M8 5v14l9-7z" fill="none" stroke="#333" />}
    {k === "pause" && <path d="M8 7h3v10H8zM13 7h3v10h-3z" fill="none" stroke="#333" />}
    {k === "first" && <path d="M17 5v14L9 12zM7 5v14" fill="none" stroke="#333" />}
    {k === "last" && <path d="M7 5v14l8-7zM17 5v14" fill="none" stroke="#333" />}
  </svg>
);

/* ---------- model ---------- */
const LINE = "#3e2433";
const P = (props: React.SVGProps<SVGPathElement>) => <path stroke={LINE} strokeWidth={1} vectorEffect="non-scaling-stroke" {...props} />;
const Model = () => (
  <ModelSvg width="1463" height="781" viewBox="457 226 1463 781">
    <defs>
      <linearGradient id="shaft" gradientUnits="userSpaceOnUse" x1="700" y1="603" x2="1120" y2="1211">
        <stop offset="0" stopColor="#ff72b8" /><stop offset=".28" stopColor="#ff78bd" /><stop offset=".42" stopColor="#ff8bd0" /><stop offset=".55" stopColor="#e872ae" /><stop offset=".72" stopColor="#b0597f" /><stop offset=".9" stopColor="#6a3350" /><stop offset=".97" stopColor="#52293e" /><stop offset="1" stopColor="#52293e" />
      </linearGradient>
      <linearGradient id="disc" gradientUnits="userSpaceOnUse" x1="1310" y1="660" x2="1440" y2="900">
        <stop offset="0" stopColor="#ff85c8" /><stop offset=".4" stopColor="#d56ba5" /><stop offset="1" stopColor="#57293f" />
      </linearGradient>
      <linearGradient id="toothA" gradientUnits="userSpaceOnUse" x1="1190" y1="580" x2="1270" y2="790">
        <stop offset="0" stopColor="#ff7dc2" /><stop offset="1" stopColor="#b25a88" />
      </linearGradient>
      <linearGradient id="recessA" gradientUnits="userSpaceOnUse" x1="1180" y1="400" x2="1220" y2="570">
        <stop offset="0" stopColor="#4f283c" /><stop offset="1" stopColor="#ff80c4" />
      </linearGradient>
      <linearGradient id="recessB" gradientUnits="userSpaceOnUse" x1="1270" y1="820" x2="1310" y2="980">
        <stop offset="0" stopColor="#4f283c" /><stop offset="1" stopColor="#ff80c4" />
      </linearGradient>
      <linearGradient id="toothB" gradientUnits="userSpaceOnUse" x1="1310" y1="980" x2="1340" y2="1150">
        <stop offset="0" stopColor="#8a4568" /><stop offset="1" stopColor="#5a2c42" />
      </linearGradient>
      <linearGradient id="toothC" gradientUnits="userSpaceOnUse" x1="1340" y1="1150" x2="1350" y2="1240">
        <stop offset="0" stopColor="#e070ad" /><stop offset="1" stopColor="#7a3c5c" />
      </linearGradient>
      <linearGradient id="floor" gradientUnits="userSpaceOnUse" x1="500" y1="965" x2="530" y2="1060">
        <stop offset="0" stopColor="#5a2e45" /><stop offset="1" stopColor="#ee78b5" />
      </linearGradient>
      <linearGradient id="wall" gradientUnits="userSpaceOnUse" x1="270" y1="950" x2="600" y2="950">
        <stop offset="0" stopColor="#55707e" /><stop offset="1" stopColor="#2f4048" />
      </linearGradient>
      <linearGradient id="fillet" gradientUnits="userSpaceOnUse" x1="210" y1="960" x2="290" y2="960">
        <stop offset="0" stopColor="#ff90d0" /><stop offset="1" stopColor="#a9547d" />
      </linearGradient>
      <linearGradient id="pinkR" gradientUnits="userSpaceOnUse" x1="850" y1="1000" x2="1000" y2="1130">
        <stop offset="0" stopColor="#ff85c8" /><stop offset="1" stopColor="#e0659f" />
      </linearGradient>
      <linearGradient id="blue" gradientUnits="userSpaceOnUse" x1="800" y1="1100" x2="1030" y2="1240">
        <stop offset="0" stopColor="#d8dfe4" /><stop offset=".6" stopColor="#9cc7dc" /><stop offset="1" stopColor="#78a6bd" />
      </linearGradient>
    </defs>
    <g transform="translate(700 230) scale(.6059 .3333)">
      {/* back disc */}
      <P d="M1212,185 L1297,130 L1478,1022 L1400,1078 L1252,1125 L1090,340 Z" fill="url(#disc)" />
      <P d="M1243,312 L1325,258 M1320,680 L1405,620 M1372,935 L1449,878" fill="none" />
      <path d="M1478,1022 L1449,878 L1372,935 L1400,1078 Z" fill="#52293e" />
      {/* shaft */}
      <P d="M53,1048 L185,958 L272,898 L872,484 C880,520 895,540 915,540 C945,540 965,490 960,424 L1085,340 L1252,1125 L1118,1208 L1075,1155 L1035,1270 L875,1380 L130,1380 Z" fill="url(#shaft)" />
      <P d="M960,424 C970,450 975,480 965,505 C958,520 948,530 935,535 C945,500 950,460 960,424 Z" fill="#b25e8c" />
      <P d="M53,1048 L62,1060 L132,1380 L118,1380 Z" fill="#74395a" />
      {/* groove */}
      <P d="M205,975 C240,950 255,935 272,898 C320,915 450,905 600,897 C700,897 790,925 845,955 C920,1000 980,1050 1015,1095 C1030,1120 1060,1140 1075,1155 L1035,1270 C1000,1225 960,1205 930,1180 C870,1140 830,1110 775,1092 C730,1075 700,1068 655,1065 C550,1060 450,1055 380,1045 C320,1035 250,1005 205,975 Z" fill="url(#floor)" />
      <path d="M205,975 C240,950 255,935 272,898 L292,1020 C260,1005 230,990 205,975 Z" fill="url(#fillet)" />
      <path d="M272,898 C320,915 450,905 600,897 C640,897 700,905 735,925 C640,935 480,960 350,1000 L292,1020 C280,970 270,940 272,898 Z" fill="url(#wall)" />
      <path d="M440,912 L600,897 C640,897 700,905 735,925 L620,935 L590,925 L560,938 L520,925 L490,945 L460,925 L420,948 L400,935 L440,912 Z" fill="#4a2a3a" />
      <path d="M733,925 L838,955 L775,1092 L668,1065 Z" fill="#dfe0e2" />
      <path d="M720,955 L733,925 L668,1065 L655,1065 Z" fill="#5a2f48" />
      <path d="M845,955 L838,955 L775,1092 L790,1095 L825,1010 Z" fill="#b85c90" />
      <path d="M845,955 C920,1000 980,1050 1012,1095 L1000,1160 L790,1095 Z" fill="url(#pinkR)" />
      <path d="M780,1095 L1005,1160 L1035,1270 C985,1205 900,1140 780,1095 Z" fill="url(#blue)" />
      <path d="M1000,1160 C1020,1195 1025,1230 1035,1270 L1020,1250 Z" fill="#e079b0" opacity=".7" />
      <path d="M1015,1095 C1030,1120 1060,1140 1075,1155 C1050,1160 1025,1175 1005,1165 Z" fill="#b85c88" />
      <path d="M1075,1155 L1118,1208 L1035,1270 C1028,1215 1035,1180 1075,1155 Z" fill="#dedfe1" />
      <P d="M272,898 C320,915 450,905 600,897 C700,897 790,925 845,955 C920,1000 980,1050 1015,1095 M205,975 C250,1005 320,1035 380,1045 C450,1055 550,1060 655,1065 C700,1068 730,1075 775,1092 L1000,1160 M775,1092 C830,1110 870,1140 930,1180 C960,1205 1000,1225 1035,1270" fill="none" strokeWidth={1.3} />
      {/* ring teeth */}
      <P d="M1058,180 L1090,340 L1120,450 L1157,615 L1210,865 L1245,1025 L1285,1272 L1272,1200 L1240,1030 L1205,870 L1150,620 L1115,455 L1068,240 Z" fill="#75395a" />
      <P d="M1058,180 L1188,90 L1197,108 L1065,195 Z" fill="#e872ae" />
      <P d="M1065,195 L1197,108 L1215,183 L1080,268 Z" fill="#ff80c4" />
      <P d="M1080,268 L1215,183 L1255,365 L1120,450 Z" fill="#ff80c4" />
      <P d="M1120,450 L1255,365 L1285,530 L1157,615 Z" fill="url(#recessA)" />
      <P d="M1157,615 L1285,530 L1340,780 L1210,865 Z" fill="url(#toothA)" />
      <P d="M1210,865 L1340,780 L1372,935 L1245,1025 Z" fill="url(#recessB)" />
      <P d="M1245,1025 L1372,935 L1405,1112 L1272,1200 Z" fill="url(#toothB)" />
      <P d="M1272,1200 L1405,1112 L1415,1180 L1285,1272 Z" fill="url(#toothC)" />
      <P d="M1415,1180 L1285,1272 L1283,1262 L1412,1170 Z" fill="#6a3350" />
      {/* tool path */}
      <g fill="none">
        <path d="M128,595 L205,945 M152,595 L225,930" stroke="#1a1ae0" strokeDasharray="3 2" vectorEffect="non-scaling-stroke" />
        <path d="M175,810 L200,945" stroke="#f9c8d8" vectorEffect="non-scaling-stroke" />
        <path d="M215,960 L245,915 L270,930 L330,945 L390,950 L500,945 L600,940 L700,945 L800,980 L900,1040 L1000,1120 L1055,1175" stroke="#19e0ea" vectorEffect="non-scaling-stroke" />
        <path d="M215,960 L290,995 L350,1010 L410,1018 L600,1020 L700,1030 L800,1060 L900,1120 L990,1190 L1055,1255 L1045,1215 L1060,1185 L1078,1175 L1090,1190 L1100,1225" stroke="#19e0ea" vectorEffect="non-scaling-stroke" />
        <path d="M225,925 L222,950 L240,945" stroke="#f4d020" vectorEffect="non-scaling-stroke" />
      </g>
      <ellipse cx="206" cy="957" rx="9" ry="14" fill="#f5a040" />
      {/* wcs */}
      <path d="M1328,300 L1340,352 L1330,352 Z" fill="#b5e8b0" stroke="#5aa85a" strokeWidth=".5" />
      <path d="M1338,350 L1385,560" stroke="#9cdc98" strokeWidth="1.2" vectorEffect="non-scaling-stroke" />
      <path d="M1372,480 L1385,575 L1380,575 Z" fill="#3d64a8" />
      <path d="M1395,572 L1520,488 L1512,478 L1552,464 L1530,495 L1522,486 Z" fill="#e03030" stroke="#b02020" strokeWidth=".6" />
      <path d="M1420,555 L1470,520 L1460,535 L1430,555 Z" fill="#d82828" />
    </g>
    <g fontFamily={`"Liberation Sans", sans-serif`} fontSize="13">
      <text x="1508" y="326" fill="#3fa04a">YM</text>
      <text x="1524" y="369" fill="#3fa04a">YC</text>
      <text x="1530" y="386" fill="#1a4fe0">ZM</text>
      <text x="1535" y="402" fill="#1a4fe0">ZC</text>
      <text x="1574" y="398" fill="#d03434">XC</text>
      <text x="1620" y="380" fill="#d03434">XM</text>
    </g>
    {/* triad */}
    <path d="M523,942 L545,933 L553,962 L533,970 Z" fill="#d4d4d4" stroke="#a8a8a8" />
    <path d="M527,949 L548,941 M530,960 L551,952" stroke="#aaa" />
    <path d="M521,942 L527,950 L534,980" stroke="#e03030" strokeWidth="3" fill="none" />
    <path d="M522,939 L550,926 L558,925" stroke="#1a4fe0" strokeWidth="2.5" fill="none" />
    <circle cx="519" cy="941" r="4" fill="#ddd" stroke="#999" />
    <g fontFamily={`"Liberation Sans", sans-serif`} fontSize="12">
      <text x="559" y="929" fill="#1a4fe0">Z</text>
      <text x="532" y="988" fill="#d85050">X</text>
    </g>
  </ModelSvg>
);

/* ---------- page ---------- */
const rowCount = Array.from({ length: 28 }, (_, i) => i);
const railItems: [string, number, number?, boolean?][] = [
  ["gear", 0, 28], ["railPart", 21], ["railOp", 15], ["railSurf", 14], ["railNav", 6, 44, true], ["railTable", 7], ["railMach", 13],
  ["railBooks", 14], ["railInfo", 27], ["railGlobe", 24], ["railClock", 26], ["railRainbow", 15], ["railFresh", 15], ["railTools", 14], ["railFold", 14],
];
const sideItems: [string, number][] = [
  ["rFade1", 12], ["rWin", 3], ["rP", 6], ["rVerify", 3], ["rTrim", 4], ["rCopy", 4], ["selectPath", 3], ["rStar", 4], ["genPath", 5], ["rDoc", 3],
];

const Chevron = () => (
  <svg width="15" height="12" viewBox="0 0 15 12"><path d="M1 1.500l6.500 8 6.500-8" stroke="#0d6f94" strokeWidth="2.6" fill="none" /></svg>
);

const RowContent = (i: number) => {
  if (i === 0) return <NameCell><RowLabel $ml={4}>NC_PROGRAM</RowLabel></NameCell>;
  if (i === 1)
    return (
      <NameCell>
        <svg width="20" height="24" viewBox="0 0 20 24"><path d="M9 24V12H20" stroke="#999" strokeDasharray="1 2" fill="none" /></svg>
        <Ic n="folder" w={14} h={14} />
        <RowLabel $ml={4}>未用项</RowLabel>
      </NameCell>
    );
  if (i === 2)
    return (
      <NameCell>
        <svg width="36" height="24" viewBox="0 0 36 24">
          <rect x="4" y="7" width="10" height="10" fill="#fff" stroke="#ccc" /><path d="M6 12h6" stroke="#222" /><path d="M9 0v7M14 12h5" stroke="#999" strokeDasharray="1 2" />
          <rect x="26" y="4" width="2" height="11" fill="#f5c83a" /><rect x="26" y="17" width="2" height="2" fill="#f5c83a" />
        </svg>
        <Ic n="folder" w={14} h={14} />
        <RowLabel $ml={5}>PROGRAM</RowLabel>
      </NameCell>
    );
  if (i === 3)
    return (
      <NameCell>
        <svg width="39" height="24" viewBox="0 0 39 24"><path d="M28 0v12h10" stroke="#999" strokeDasharray="1 2" fill="none" /></svg>
        <svg width="15" height="24" viewBox="0 0 15 24"><path d="M1 12l4 5 9-11" stroke="#2ecc40" strokeWidth="2" fill="none" /></svg>
        <Ic n="opVar" w={16} h={16} />
        <SelName>VARIABLE_CO...</SelName>
      </NameCell>
    );
  return <NameCell />;
};

export default function App() {
  return (
    <Screen>
      <Global />
      <TitleBar>
        <NxLogo>NX</NxLogo>
        <QatSep $m={1} />
        <QatSlot $w={32}><Ic n="save" s={16} /></QatSlot>
        <QatSep $m={0} />
        <QatSlot $w={24}><Ic n="undo" s={15} /></QatSlot><QatSlot $w={16}><Caret $c="#aaa" /></QatSlot>
        <QatSep $m={4} />
        <QatSlot $w={20}><Ic n="cut" s={16} /></QatSlot><QatSlot $w={28}><Ic n="copy" s={16} /></QatSlot><QatSlot $w={16}><Ic n="paste" s={16} /></QatSlot><QatSlot $w={28}><Ic n="repeat" s={16} /></QatSlot>
        <QatSep $m={1} />
        <QatSlot $w={29}><Ic n="qatSel" s={16} /></QatSlot><QatSlot $w={8}><Caret /></QatSlot>
        <QatSep $m={7} />
        <QatSlot $w={16}><Ic n="eraser" s={17} /></QatSlot>
        <QatSep $m={7} />
        <QatSlot $w={14}><Ic n="switchWin" s={16} /></QatSlot><QatText $off $ml={5} $mr={8}>切换窗口</QatText>
        <QatSlot $w={20}><Ic n="window" s={17} /></QatSlot><QatText $ml={0} $mr={2}>窗口</QatText>
        <QatSlot $w={14}><Caret $w={8} /></QatSlot>
        <QatSlot $w={16}><svg width="10" height="9" viewBox="0 0 10 9"><path d="M1 1h8M1 3l4 5 4-5z" stroke="#222" fill="#222" /></svg></QatSlot>
        <CenterTitle>NX - 加工</CenterTitle>
        <Brand>SIEMENS</Brand>
        <WinBtns>
          <svg width="14" height="14" viewBox="0 0 14 14"><rect x="1" y="10" width="8" height="2" fill="#777" /></svg>
          <svg width="14" height="14" viewBox="0 0 14 14"><path d="M4 3V1h9v8h-2M1 4h9v9H1zM1 6h9" stroke="#555" strokeWidth="1.2" fill="none" /></svg>
          <svg width="14" height="14" viewBox="0 0 14 14" style={{ marginLeft: 3 }}><path d="M1 1l12 12M13 1L1 13" stroke="#555" strokeWidth="1.6" /></svg>
        </WinBtns>
      </TitleBar>

      <TabBar>
        <FileTab>文件(F)</FileTab>
        <Tab $active $w={64}>主页</Tab>
        <Tab $w={80}>几何体</Tab>
        <Tab $w={64}>分析</Tab>
        <Tab $w={64}>视图</Tab>
        <Tab $w={64}>装配</Tab>
        <Tab $w={64}>渲染</Tab>
        <Tab $w={64}>工具</Tab>
        <Tab $w={96}>应用模块</Tab>
        <Tab $w={64}>内部</Tab>
        <TabTools>
          <Search>查找命令<svg width="17" height="17" viewBox="0 0 17 17"><circle cx="10.500" cy="6.500" r="5" fill="#fff" stroke="#555" strokeWidth="1.2" /><path d="M7 10l-5 5.500" stroke="#555" strokeWidth="2" /></svg></Search>
          <svg width="16" height="16" viewBox="0 0 16 16" style={{ marginLeft: 10 }}><path d="M1 5V1h4M11 1h4v4M15 11v4h-4M5 15H1v-4" stroke="#444" fill="none" /></svg>
          <svg width="16" height="10" viewBox="0 0 16 10" style={{ marginLeft: 10 }}><path d="M1 9l7-8 7 8" stroke="#444" fill="none" /></svg>
          <svg width="16" height="16" viewBox="0 0 16 16" style={{ marginLeft: 9 }}><circle cx="8" cy="8" r="7" fill="none" stroke="#444" /><text x="8" y="12" textAnchor="middle" fontSize="11" fill="#444" fontFamily="Liberation Sans">?</text></svg>
          <span style={{ marginLeft: 6 }}><Ic n="hat" s={17} /></span>
          <Tutorial>教程</Tutorial>
          <GreyDot />
        </TabTools>
      </TabBar>

      <Ribbon>
        <Group $w={257}>
          <GroupBody $pl={5}>
            <BigBtn $w={72} $off><BigIcon><Ic n="tool" s={33} f /></BigIcon>创建刀具</BigBtn>
            <BigBtn $w={72} $off><BigIcon><Ic n="geom" s={33} f /></BigIcon>创建几何体</BigBtn>
            <BigBtn $w={72} $off><BigIcon><Ic n="op" s={33} f /></BigIcon>创建工序</BigBtn>
            <SmallStack $w={26} $gap={16} $mt={10}><Ic n="sheet" s={24} f /><Ic n="wave" s={24} f /></SmallStack>
          </GroupBody>
          <GroupFoot><GroupLabel>插入</GroupLabel><Caret /></GroupFoot>
        </Group>
        <Group $w={54}>
          <GroupBody>
            <BigBtn $w={54} $off><BigIcon><Ic n="attrs" s={32} f /></BigIcon>属性<BtnCaret><Caret /></BtnCaret></BigBtn>
          </GroupBody>
          <GroupFoot><GroupLabel>操作</GroupLabel><Caret /></GroupFoot>
        </Group>
        <Group $w={446}>
          <GroupBody $pl={8}>
            <BigBtn $w={66}><BigIcon><Ic n="genPath" s={34} /></BigIcon>生成刀轨</BigBtn>
            <BigBtn $w={64}><BigIcon><Ic n="verify" s={34} /></BigIcon>确认刀轨</BigBtn>
            <BigBtn $w={74} $off><BigIcon><Ic n="vericut" s={34} f /></BigIcon>VERICUT...</BigBtn>
            <BigBtn $w={70} $off><BigIcon><Ic n="simulate" s={34} f /></BigIcon>Simulate<br />Machine</BigBtn>
            <BigBtn $w={48} $off><BigIcon><Ic n="post" s={34} f /></BigIcon>后处理</BigBtn>
            <BigBtn $w={70} $off><BigIcon><Ic n="docs" s={32} f /></BigIcon>车间文档</BigBtn>
            <BigBtn $w={46}><MoreBox><Ic n="moreDrill" s={24} /></MoreBox>更多<BtnCaret><Caret /></BtnCaret></BigBtn>
          </GroupBody>
          <GroupFoot><GroupLabel>工序</GroupLabel><Caret /></GroupFoot>
        </Group>
        <Group $w={245}>
          <GroupBody $pl={10}>
            <SelectedBtn><BigIcon><Ic n="selectPath" s={34} /></BigIcon>选择刀轨</SelectedBtn>
            <SmallStack $w={31} $gap={7} $mt={7} $ml={2}>
              <ToggleSquare><Ic n="hatchA" s={24} /></ToggleSquare>
              <ToggleSquare><Ic n="hatchB" s={24} /></ToggleSquare>
            </SmallStack>
            <SmallStack $w={58} $gap={7} $mt={7} $start>
              <SplitIcon><Ic n="bit" s={26} /><Caret $w={8} /></SplitIcon>
              <SplitIcon><Ic n="pathDoc" s={26} /></SplitIcon>
            </SmallStack>
            <SmallStack $w={34} $gap={4} $mt={6}>
              <Ic n="arrowUp" s={20} /><Ic n="layers" s={22} /><Ic n="arrowDown" s={20} />
            </SmallStack>
            <BigBtn $w={46} $ml={1}><MoreBox><Ic n="moreS" s={24} /></MoreBox>更多<BtnCaret><Caret /></BtnCaret></BigBtn>
          </GroupBody>
          <GroupFoot><GroupLabel>显示</GroupLabel><Caret /></GroupFoot>
        </Group>
        <Group $w={166}>
          <GroupBody>
            <PlayerGrid>
              <Circle k="prev" /><PauseCell><Circle k="pause" /></PauseCell><PlayCell><Circle k="play" /></PlayCell>
              <GridRowTwo><Circle k="first" /></GridRowTwo>
              <GridRowTwo><Caret /></GridRowTwo>
              <Combo5>5<Caret /></Combo5>
              <GridRowTwo />
              <GridRowTwo><Circle k="last" /></GridRowTwo>
              <GridRowTwo><Caret /></GridRowTwo>
            </PlayerGrid>
          </GroupBody>
          <GroupFoot><GroupLabel>刀轨动画</GroupLabel><Caret /></GroupFoot>
        </Group>
        <Group $w={173}>
          <GroupBody $pl={8}>
            <BigBtn $w={68}><BigIcon><Ic n="ipw" s={36} /></BigIcon>显示 IPW</BigBtn>
            <BigBtn $w={90}><BigIcon><Ic n="ipw3d" s={32} /></BigIcon>显示 3D IPW<BtnCaret><Caret /></BtnCaret></BigBtn>
          </GroupBody>
          <GroupFoot><GroupLabel>IPW</GroupLabel><Caret /></GroupFoot>
        </Group>
        <Group $w={150}>
          <GroupBody $pl={5}>
            <IconColumn>
              <IconRow>
                <RowSlot><Ic n="gcA" s={20} /></RowSlot><RowSlot><Ic n="gcB" s={20} /></RowSlot><RowSlot><Ic n="gcC" s={20} /></RowSlot><RowSlot><Ic n="gcD" s={20} /></RowSlot>
                <RowSep /><RowSlot><Ic n="gcE" s={20} /></RowSlot>
              </IconRow>
              <IconRow $mt={4}>
                <RowSlot><Ic n="gcF" s={20} /></RowSlot><RowSlot><Ic n="gcG" s={20} /></RowSlot>
                <RowSep /><RowSlot><Ic n="gcH" s={20} /></RowSlot><RowSlot><Ic n="gcI" s={20} /></RowSlot><RowSlot><Ic n="gcH" s={20} /></RowSlot><RowSlot><Ic n="gcJ" s={20} /></RowSlot>
              </IconRow>
            </IconColumn>
          </GroupBody>
          <GroupFoot><GroupLabel>加工工具 - GC工具...</GroupLabel><Caret /></GroupFoot>
        </Group>
        <Group $w={216}>
          <GroupBody $pl={4}>
            <BigBtn $w={74} $off><BigIcon><Ic n="binocular" s={34} f /></BigIcon>查找特征</BigBtn>
            <BigBtn $w={82} $off><BigIcon><Ic n="featureOp" s={34} f /></BigIcon>创建特征工艺</BigBtn>
            <BigBtn $w={46} $ml={9}><MoreBox><Ic n="moreCube" s={22} /></MoreBox>更多<BtnCaret><Caret /></BtnCaret></BigBtn>
          </GroupBody>
          <GroupFoot><GroupLabel>特征</GroupLabel><Caret /></GroupFoot>
        </Group>
        <RibbonEnd><Caret /></RibbonEnd>
      </Ribbon>

      <Toolbar>
        <MenuBtn><MenuBars />菜单(<u>M</u>)<MenuCaret $w={8} /></MenuBtn>
        <TbSep $r={8} />
        <TbIcon $on><Ic n="tree1" s={17} /></TbIcon><TbIcon><Ic n="tree2" s={17} /></TbIcon><TbIcon $w={26}><Ic n="tree3" s={17} /></TbIcon><TbIcon><Ic n="tree4" s={17} /></TbIcon>
        <TbSep $l={7} $r={7} />
        <TbIcon><Ic n="treeG1" s={17} /></TbIcon><TbIcon $w={25}><Ic n="treeG2" s={17} /></TbIcon>
        <TbSep $l={7} $r={12} />
        <TbCombo $w={167}>刀轨<Caret $c="#aaa" /></TbCombo>
        <TbCombo $w={175} $ml={9}>整个装配<Caret $c="#aaa" /></TbCombo>
        <TbIcon $on $ml={6}><Ic n="filt1" s={17} /></TbIcon>
        <TbIcon><Ic n="chain" s={18} /></TbIcon><TbIcon><Ic n="funnel" s={18} /></TbIcon><TbIcon><Ic n="tgt" s={18} /></TbIcon><TbIcon $w={23}><Ic n="boxTree" s={18} /></TbIcon>
        <TbIcon $ml={5}><Ic n="hex" s={18} /></TbIcon><TbIcon><Ic n="cubeT" s={18} /></TbIcon><TbIcon $ml={2}><Ic n="cubeG" s={18} /></TbIcon><TbIcon><Ic n="cubeCut" s={18} /></TbIcon>
        <TbSep $l={9} $r={7} />
        <TbIcon><Ic n="vZoom" s={17} /></TbIcon><TbIcon $ml={1}><Ic n="vPan" s={17} /></TbIcon><TbIcon><Ic n="vRot" s={17} /></TbIcon><TbIcon $ml={2}><Ic n="cubeD" s={18} /></TbIcon><TbIcon $w={26}><Ic n="cubeGear" s={18} /></TbIcon>
        <TbIcon><Ic n="vFit" s={17} /></TbIcon><TbIcon $w={16}><Caret $w={8} /></TbIcon>
        <TbIcon $ml={1}><Ic n="shade" s={18} /></TbIcon><TbIcon $w={18}><Caret $w={8} /></TbIcon>
        <TbIcon $ml={2}><Ic n="cylinder" s={18} /></TbIcon><TbIcon $w={18}><Caret $w={8} /></TbIcon>
        <TbIcon $ml={3}><Ic n="vis" s={18} /></TbIcon><TbIcon $w={14}><Caret $w={8} /></TbIcon>
        <TbSep $l={9} />
        <TbEnd><Caret /></TbEnd>
      </Toolbar>

      <Main>
        <Rail>
          {railItems.map(([n, mt, h, on], i) => (
            <RailItem key={i} $mt={mt} $h={h} $on={on}><Ic n={n} s={i === 0 ? 16 : 25} /></RailItem>
          ))}
        </Rail>
        <NavPanel>
          <NavHead>工序导航器 - 程序顺序<MaxBox /></NavHead>
          <TableFrame>
            <TableHead>
              <HeadCell>名称</HeadCell><HeadCell>换刀</HeadCell><HeadCell>刀轨</HeadCell><HeadCell>刀</HeadCell>
            </TableHead>
            <Rows>
              {rowCount.map((i) => (
                <Row key={i} $odd={i % 2 === 1}>
                  {RowContent(i)}
                  <DataCell $sel={i === 3}>{i === 3 && <Ic n="tinyDrill" w={8} h={14} />}</DataCell>
                  <DataCell $sel={i === 3} $pl={5}>{i === 3 && <svg width="15" height="14" viewBox="0 0 15 14"><path d="M1 7l4 5 9-11" stroke="#2ecc40" strokeWidth="2" fill="none" /></svg>}</DataCell>
                  <DataCell $sel={i === 3} $pl={5} $last>{i === 3 && "M"}</DataCell>
                </Row>
              ))}
            </Rows>
            <Scrollbar>
              <ScrollThumb />
              <svg width="8" height="12" viewBox="0 0 8 12"><path d="M7 1L2 6l5 5" stroke="#555" strokeWidth="1.8" fill="none" /></svg>
              <svg width="8" height="12" viewBox="0 0 8 12"><path d="M1 1l5 5-5 5" stroke="#555" strokeWidth="1.8" fill="none" /></svg>
            </Scrollbar>
          </TableFrame>
          <Splitter />
          <Accordion>相关性<Chevron /></Accordion>
          <Accordion>细节<Chevron /></Accordion>
        </NavPanel>
        <SideRail>
          {sideItems.map(([n, mt], i) => (
            <SideItem key={i} $mt={mt}><Ic n={n} s={25} f={["rFade1", "rP", "rTrim", "rDoc"].includes(n)} /></SideItem>
          ))}
          <SideRule />
          <Collapse />
        </SideRail>
        <Workspace>
          <DocTabs>
            <DocTab><Ic n="home" s={15} />欢迎页面</DocTab>
            <DocTab $active>
              <Ic n="genPath" s={17} />012加工案例素材_x_t.prt
              <Ic n="pageEdit" s={13} />
              <CloseGlyph width="11" height="11" viewBox="0 0 11 11"><path d="M2 2l7 7M9 2l-7 7" stroke="#cfe3ea" strokeWidth="2" /></CloseGlyph>
            </DocTab>
          </DocTabs>
          <Canvas><Model /></Canvas>
        </Workspace>
      </Main>

      <StatusBar><FitCorners /></StatusBar>

      <Taskbar>
        <StartBtn><svg width="21" height="21" viewBox="0 0 21 21"><path d="M0 3l9-1.300V10H0zM10 1.500L21 0v10H10zM0 11h9v8.300L0 18zM10 11h11v10l-11-1.500z" fill="#fff" /></svg></StartBtn>
        <SearchBox>
          <CortanaRing />在这里输入你要搜索的内容
          <MicSlot><svg width="13" height="22" viewBox="0 0 13 22"><rect x="3.500" y="1" width="6" height="12" rx="3" fill="none" stroke="#333" strokeWidth="1.300" /><path d="M1 9c0 5 2 7 5.500 7S12 14 12 9M6.500 16v5M3 21h7" stroke="#333" fill="none" strokeWidth="1.300" /></svg></MicSlot>
        </SearchBox>
        <TaskIcons>
          <TaskItem $w={58}><svg width="20" height="18" viewBox="0 0 20 18"><path d="M1 1h3M1 17h3M1 5h5v8H1M9 1h9v4H9zM9 8h9v2H9zM9 13h9v4H9z" stroke="#fff" fill="none" /></svg></TaskItem>
          <TaskItem $w={77}><svg width="30" height="30" viewBox="0 0 30 30"><circle cx="15" cy="15" r="14" fill="#f4f4f4" /><path d="M15 1c-8 5 8 9 0 14s8 9 0 14" stroke="#0a1418" strokeWidth="2.500" fill="none" /></svg></TaskItem>
          <TaskItem $w={51} $bar><svg width="28" height="30" viewBox="0 0 28 30"><path d="M1 1h20l6 5v23H1z" fill="#f5d778" /><path d="M1 1h10v8H1z" fill="#f8e9b0" /><rect x="9" y="17" width="10" height="12" fill="#2a95d8" /><rect x="12" y="20" width="4" height="9" fill="#8bd0f5" /></svg></TaskItem>
          <TaskItem $w={11} />
          <TaskItem $w={51} $bar><svg width="30" height="34" viewBox="0 0 30 34"><path d="M15 8C7 4 1 9 1 18c0 8 6 15 10 15 2 0 3-1 4-1s2 1 4 1c4 0 10-7 10-15 0-9-6-14-14-10z" fill="#e52a1e" /><path d="M15 8c1-4 3-6 6-7" stroke="#3a8a2a" strokeWidth="2" fill="none" /></svg></TaskItem>
          <TaskItem $w={6} />
          <TaskItem $w={61} $on $bar><svg width="30" height="36" viewBox="0 0 30 36"><path d="M6 3l16-1-7 13z" fill="#e02050" /><path d="M20 6c8 6 10 20-1 28-3 1-8 1-10-1 8 0 13-10 7-20z" fill="#2a7ae0" /><path d="M9 33c3-8 8-18 7-24" stroke="#f5b020" strokeWidth="3" fill="none" /><path d="M4 10c2 6 6 12 12 13" stroke="#1a60c0" strokeWidth="2" fill="none" /></svg></TaskItem>
          <TaskItem $w={6} />
          <TaskItem $w={51} $bar><svg width="30" height="34" viewBox="0 0 30 34"><ellipse cx="15" cy="17" rx="14" ry="15" fill="#4caf30" /><ellipse cx="15" cy="17" rx="10" ry="11" fill="#eef" /><text x="15" y="24" textAnchor="middle" fontSize="20" fontFamily="Liberation Sans" fontWeight="700" fill="#3a9a20">e</text></svg></TaskItem>
          <TaskItem $w={12} />
          <TaskItem $w={50} $bar><svg width="30" height="36" viewBox="0 0 30 36"><path d="M15 1l14 9v16l-14 9-14-9V10z" fill="#2a78e0" /><text x="15" y="23" textAnchor="middle" fontSize="16" fontFamily="Liberation Sans" fill="#fff">W</text></svg></TaskItem>
        </TaskIcons>
        <Temp>55°C<br />CPU温度</Temp>
        <Tray>
          <TraySlot $w={36}><svg width="18" height="22" viewBox="0 0 18 22"><circle cx="11" cy="6" r="4" fill="none" stroke="#fff" /><path d="M8 10c-2 3-5 6-6 10M14 10c1 2 2 3 3 4M4 16c3-1 6 0 7 2" stroke="#fff" fill="none" /></svg></TraySlot>
          <TraySlot $w={34}><svg width="13" height="8" viewBox="0 0 13 8"><path d="M1 7l5.500-6 5.500 6" stroke="#fff" fill="none" /></svg></TraySlot>
          <TraySlot $w={26}><svg width="18" height="18" viewBox="0 0 18 18"><path d="M1 6h3l5-4v14l-5-4H1zM11 6c2 2 2 4 0 6M13 3c4 4 4 8 0 12" stroke="#eee" fill="none" /></svg></TraySlot>
          <TraySlot $w={38}><svg width="20" height="20" viewBox="0 0 20 20"><rect x="1" y="3" width="15" height="10" fill="none" stroke="#fff" /><rect x="3" y="5" width="3" height="6" fill="#fff" /><circle cx="14" cy="14" r="5.500" fill="#0a8a2a" /></svg></TraySlot>
          <TraySlot $w={22}><svg width="18" height="18" viewBox="0 0 18 18"><path d="M1 15C1 8 6 2 15 1M5 15c0-5 4-9 10-10M9 15c0-3 2-5 6-5" stroke="#ddd" fill="none" /><circle cx="14" cy="15" r="1.300" fill="#fff" /></svg></TraySlot>
          <TraySlot $w={36}>英</TraySlot>
          <TraySlot $w={36}><MBox>M</MBox></TraySlot>
          <ClockBox>16:50<br />2019-07-27</ClockBox>
          <Notify><svg width="20" height="20" viewBox="0 0 20 20"><path d="M1 1h18v13H9l-4 4v-4H1z" fill="#fff" /><path d="M4 5h12M4 9h12" stroke="#333" /></svg><NotifyBadge>6</NotifyBadge></Notify>
        </Tray>
      </Taskbar>

      <Dialog>
        <DialogHead>输出</DialogHead>
        <DialogBody>
          <ErrorGlyph width="37" height="38" viewBox="0 0 37 38">
            <defs><radialGradient id="err" cx=".5" cy=".35" r=".7"><stop offset="0" stopColor="#ea4a4a" /><stop offset="1" stopColor="#a60f12" /></radialGradient></defs>
            <circle cx="18.500" cy="19" r="17.500" fill="#e8e8e8" stroke="#999" />
            <circle cx="18.500" cy="19" r="15" fill="url(#err)" />
            <path d="M11 11l15 16M26 11L11 27" stroke="#f2f2f2" strokeWidth="5" />
          </ErrorGlyph>
          <DialogText>
            收到一个错误 1770002<br />
            文件名：D:\workdir\reference\NX1847.2400\src\camsmom\no\ind\mom_tcl_definitions.c，行号：625<br />
            出错消息：在 do_event 中收到错误。事件处理程序：C:\H\7.20\4ZHOUXIN\4ZHOU.tcl，事件名：<br />
            MOM_before_motion，请参见系统日志以获得更多详情
          </DialogText>
        </DialogBody>
        <DialogFoot><OkBtn>确定(<u>O</u>)</OkBtn></DialogFoot>
      </Dialog>

      <Ball>62</Ball>
      <Meter><MeterInner /></Meter>
      <Watermark width="90" height="90" viewBox="0 0 90 90">
        <path d="M43 5l36 20v42L43 87 7 67V25z" fill="#9fd4f0" opacity=".55" />
        <path d="M43 18l22 13v24L43 68 21 55V31z" fill="none" stroke="#fff" strokeWidth="1.500" opacity=".7" />
        <path d="M43 30l17 9v18l-17 10-17-10V39z" fill="#2a7ba8" opacity=".55" />
        <path d="M26 39l17 9 17-9M43 48v19" stroke="#fff" strokeWidth="1" fill="none" opacity=".7" />
      </Watermark>
      <WmText>3D世界网</WmText>
      <WmUrl>WWW.3D3SJW.COM</WmUrl>
    </Screen>
  );
}
